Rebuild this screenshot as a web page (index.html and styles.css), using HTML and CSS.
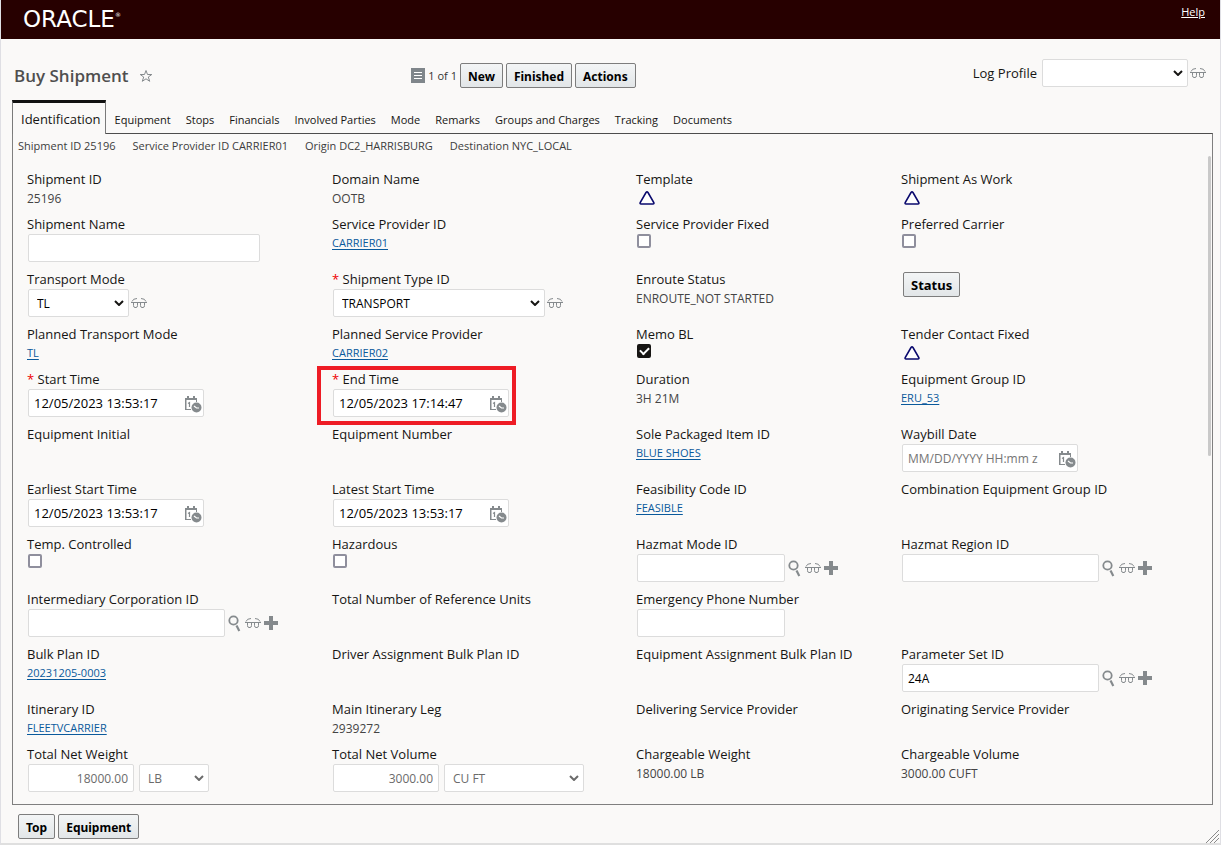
FILE: index.html
```html
<!DOCTYPE html>
<html lang="en">
<head>
  <meta charset="UTF-8" />
  <meta name="viewport" content="width=device-width, initial-scale=1.0"/>
  <title>Buy Shipment</title>
  <link rel="stylesheet" href="styles.css">
</head>
<body>
  <!-- shared icons -->
  <svg class="sprite" aria-hidden="true">
    <symbol id="i-glasses" viewBox="0 0 16 12">
      <path d="M0 5.500h16M1 4.500Q2 1.500 6 1.500M15 4.500Q14 1.500 10 1.500M2.500 6v2.500Q2.500 10.500 4 10.500h1Q6.500 10.500 6.500 8.500V6M9.500 6v2.500Q9.500 10.500 11 10.500h1Q13.500 10.500 13.500 8.500V6" fill="none" stroke="currentColor"/>
    </symbol>
    <symbol id="i-search" viewBox="0 0 14 17">
      <circle cx="5.500" cy="5.500" r="4.200" fill="none" stroke="currentColor" stroke-width="1.800"/>
      <path d="M8.500 10.500l2.800 5.500" fill="none" stroke="currentColor" stroke-width="2.200"/>
    </symbol>
    <symbol id="i-plus" viewBox="0 0 14 14">
      <path d="M5 0h4v5h5v4H9v5H5V9H0V5h5z" fill="currentColor"/>
    </symbol>
    <symbol id="i-date" viewBox="0 0 17 17">
      <path d="M0 2h2V0h2v2h4V0h2v2h2v4h-1V4H1.500v9H6v1H0z" fill="currentColor"/>
      <path d="M3 7.500L4.500 6.500V11" fill="none" stroke="currentColor" stroke-width="1.200"/>
      <circle cx="11.500" cy="11.500" r="5" fill="currentColor"/>
      <path d="M9 10l2.500 2H14" fill="none" stroke="#fff" stroke-width="1.200"/>
    </symbol>
    <symbol id="i-down" viewBox="0 0 10 6">
      <path d="M1 1l4 4 4-4" fill="none" stroke="currentColor" stroke-width="2"/>
    </symbol>
    <symbol id="i-tri" viewBox="0 0 16 14">
      <path d="M7 1.500Q8 .3 9 1.500L14.800 11.500Q15.300 13 14 13H2Q.7 13 1.200 11.500z" fill="#fff" stroke="#0a0a6e" stroke-width="1.600"/>
    </symbol>
  </svg>

  <header class="topbar">
    <div class="logo">ORACLE<sup>®</sup></div>
    <a class="help" href="#">Help</a>
  </header>

  <div class="toolbar">
    <div class="title">
      <h1>Buy Shipment</h1>
      <button class="icon star" aria-label="Add to favorites"><svg width="14" height="14" viewBox="0 0 14 14"><path d="M7 1.500l1.500 4h4.300L9.300 8l1.400 4.300L7 9.800l-3.700 2.500L4.700 8 1.200 5.500h4.300z" fill="none" stroke="currentColor"/></svg></button>
    </div>
    <div class="actions">
      <button class="icon" aria-label="Show list"><svg width="14" height="15" viewBox="0 0 14 15"><path d="M0 0h14v15H0z" fill="#7f868b"/><path d="M3 4.500h8M3 7.500h8M3 10.500h8" stroke="#fff"/></svg></button>
      <span class="pager">1 of 1</span>
      <button class="btn">New</button>
      <button class="btn">Finished</button>
      <button class="btn">Actions</button>
    </div>
    <div class="profile">
      <label for="logProfile">Log Profile</label>
      <span class="select w-profile"><select id="logProfile"><option></option></select><svg><use href="#i-down"/></svg></span>
      <button class="icon" aria-label="View log profile"><svg width="16" height="12"><use href="#i-glasses"/></svg></button>
    </div>
  </div>

  <nav class="tabs">
    <a class="active" href="#">Identification</a>
    <a href="#">Equipment</a>
    <a href="#">Stops</a>
    <a href="#">Financials</a>
    <a href="#">Involved Parties</a>
    <a href="#">Mode</a>
    <a href="#">Remarks</a>
    <a href="#">Groups and Charges</a>
    <a href="#">Tracking</a>
    <a href="#">Documents</a>
  </nav>

  <main class="panel">
    <div class="summary">
      <span>Shipment ID 25196</span>
      <span>Service Provider ID CARRIER01</span>
      <span>Origin DC2_HARRISBURG</span>
      <span>Destination NYC_LOCAL</span>
    </div>

    <div class="scroll-area">
      <form class="fields">
        <div class="field"><span class="label">Shipment ID</span><span class="value">25196</span></div>
        <div class="field"><span class="label">Domain Name</span><span class="value">OOTB</span></div>
        <div class="field"><span class="label">Template</span><svg class="tri"><use href="#i-tri"/></svg></div>
        <div class="field"><span class="label">Shipment As Work</span><svg class="tri"><use href="#i-tri"/></svg></div>

        <div class="field"><label for="shipName">Shipment Name</label><div class="row"><input class="w-name" type="text" id="shipName"></div></div>
        <div class="field"><span class="label">Service Provider ID</span><a href="#">CARRIER01</a></div>
        <div class="field"><label for="spFixed">Service Provider Fixed</label><input type="checkbox" id="spFixed"></div>
        <div class="field"><label for="prefCarrier">Preferred Carrier</label><input type="checkbox" id="prefCarrier"></div>

        <div class="field"><label for="mode">Transport Mode</label>
          <div class="row">
            <span class="select w-mode"><select id="mode"><option>TL</option></select><svg><use href="#i-down"/></svg></span>
            <button type="button" class="icon" aria-label="View"><svg width="16" height="12"><use href="#i-glasses"/></svg></button>
          </div>
        </div>
        <div class="field"><label for="shipType"><b>*</b> Shipment Type ID</label>
          <div class="row">
            <span class="select w-type"><select id="shipType"><option>TRANSPORT</option></select><svg><use href="#i-down"/></svg></span>
            <button type="button" class="icon" aria-label="View"><svg width="16" height="12"><use href="#i-glasses"/></svg></button>
          </div>
        </div>
        <div class="field"><span class="label">Enroute Status</span><span class="value">ENROUTE_NOT STARTED</span></div>
        <div class="field status"><button type="button" class="btn">Status</button></div>

        <div class="field"><span class="label">Planned Transport Mode</span><a href="#">TL</a></div>
        <div class="field"><span class="label">Planned Service Provider</span><a href="#">CARRIER02</a></div>
        <div class="field"><label for="memoBl">Memo BL</label><input type="checkbox" id="memoBl" checked></div>
        <div class="field"><span class="label">Tender Contact Fixed</span><svg class="tri"><use href="#i-tri"/></svg></div>

        <div class="field"><label for="startTime"><b>*</b> Start Time</label>
          <div class="row date"><input type="text" id="startTime" value="12/05/2023 13:53:17"><button type="button" class="icon" aria-label="Pick date"><svg width="17" height="17"><use href="#i-date"/></svg></button></div>
        </div>
        <div class="field highlight"><label for="endTime"><b>*</b> End Time</label>
          <div class="row date"><input type="text" id="endTime" value="12/05/2023 17:14:47"><button type="button" class="icon" aria-label="Pick date"><svg width="17" height="17"><use href="#i-date"/></svg></button></div>
        </div>
        <div class="field"><span class="label">Duration</span><span class="value">3H 21M</span></div>
        <div class="field"><span class="label">Equipment Group ID</span><a href="#">ERU_53</a></div>

        <div class="field"><span class="label">Equipment Initial</span></div>
        <div class="field"><span class="label">Equipment Number</span></div>
        <div class="field"><span class="label">Sole Packaged Item ID</span><a href="#">BLUE SHOES</a></div>
        <div class="field"><label for="waybill">Waybill Date</label>
          <div class="row date"><input type="text" id="waybill" placeholder="MM/DD/YYYY HH:mm z"><button type="button" class="icon" aria-label="Pick date"><svg width="17" height="17"><use href="#i-date"/></svg></button></div>
        </div>

        <div class="field"><label for="earliest">Earliest Start Time</label>
          <div class="row date"><input type="text" id="earliest" value="12/05/2023 13:53:17"><button type="button" class="icon" aria-label="Pick date"><svg width="17" height="17"><use href="#i-date"/></svg></button></div>
        </div>
        <div class="field"><label for="latest">Latest Start Time</label>
          <div class="row date"><input type="text" id="latest" value="12/05/2023 13:53:17"><button type="button" class="icon" aria-label="Pick date"><svg width="17" height="17"><use href="#i-date"/></svg></button></div>
        </div>
        <div class="field"><span class="label">Feasibility Code ID</span><a href="#">FEASIBLE</a></div>
        <div class="field"><span class="label">Combination Equipment Group ID</span></div>

        <div class="field"><label for="tempCtl">Temp. Controlled</label><input type="checkbox" id="tempCtl"></div>
        <div class="field"><label for="hazardous">Hazardous</label><input type="checkbox" id="hazardous"></div>
        <div class="field"><label for="hazMode">Hazmat Mode ID</label>
          <div class="row lookup">
            <input class="w-short" type="text" id="hazMode">
            <button type="button" class="icon" aria-label="Find"><svg width="14" height="17"><use href="#i-search"/></svg></button>
            <button type="button" class="icon" aria-label="View"><svg width="16" height="12"><use href="#i-glasses"/></svg></button>
            <button type="button" class="icon" aria-label="New"><svg width="14" height="14"><use href="#i-plus"/></svg></button>
          </div>
        </div>
        <div class="field"><label for="hazRegion">Hazmat Region ID</label>
          <div class="row lookup">
            <input class="w-id" type="text" id="hazRegion">
            <button type="button" class="icon" aria-label="Find"><svg width="14" height="17"><use href="#i-search"/></svg></button>
            <button type="button" class="icon" aria-label="View"><svg width="16" height="12"><use href="#i-glasses"/></svg></button>
            <button type="button" class="icon" aria-label="New"><svg width="14" height="14"><use href="#i-plus"/></svg></button>
          </div>
        </div>

        <div class="field"><label for="corp">Intermediary Corporation ID</label>
          <div class="row lookup">
            <input class="w-id" type="text" id="corp">
            <button type="button" class="icon" aria-label="Find"><svg width="14" height="17"><use href="#i-search"/></svg></button>
            <button type="button" class="icon" aria-label="View"><svg width="16" height="12"><use href="#i-glasses"/></svg></button>
            <button type="button" class="icon" aria-label="New"><svg width="14" height="14"><use href="#i-plus"/></svg></button>
          </div>
        </div>
        <div class="field"><span class="label">Total Number of Reference Units</span></div>
        <div class="field"><label for="phone">Emergency Phone Number</label><div class="row"><input class="w-short" type="text" id="phone"></div></div>
        <div class="field"></div>

        <div class="field"><span class="label">Bulk Plan ID</span><a href="#">20231205-0003</a></div>
        <div class="field"><span class="label">Driver Assignment Bulk Plan ID</span></div>
        <div class="field"><span class="label">Equipment Assignment Bulk Plan ID</span></div>
        <div class="field"><label for="paramSet">Parameter Set ID</label>
          <div class="row lookup">
            <input class="w-id" type="text" id="paramSet" value="24A">
            <button type="button" class="icon" aria-label="Find"><svg width="14" height="17"><use href="#i-search"/></svg></button>
            <button type="button" class="icon" aria-label="View"><svg width="16" height="12"><use href="#i-glasses"/></svg></button>
            <button type="button" class="icon" aria-label="New"><svg width="14" height="14"><use href="#i-plus"/></svg></button>
          </div>
        </div>

        <div class="field"><span class="label">Itinerary ID</span><a href="#">FLEETVCARRIER</a></div>
        <div class="field"><span class="label">Main Itinerary Leg</span><span class="value">2939272</span></div>
        <div class="field"><span class="label">Delivering Service Provider</span></div>
        <div class="field"><span class="label">Originating Service Provider</span></div>

        <div class="field"><label for="netWeight">Total Net Weight</label>
          <div class="row measure">
            <input type="text" id="netWeight" value="18000.00" disabled>
            <span class="select w-lb"><select aria-label="Weight unit" disabled><option>LB</option></select><svg><use href="#i-down"/></svg></span>
          </div>
        </div>
        <div class="field"><label for="netVolume">Total Net Volume</label>
          <div class="row measure">
            <input type="text" id="netVolume" value="3000.00" disabled>
            <span class="select w-cuft"><select aria-label="Volume unit" disabled><option>CU FT</option></select><svg><use href="#i-down"/></svg></span>
          </div>
        </div>
        <div class="field"><span class="label">Chargeable Weight</span><span class="value">18000.00 LB</span></div>
        <div class="field"><span class="label">Chargeable Volume</span><span class="value">3000.00 CUFT</span></div>
      </form>
      <div class="thumb"></div>
    </div>
  </main>

  <footer class="footer">
    <button class="btn">Top</button>
    <button class="btn">Equipment</button>
    <svg class="grip" width="13" height="13" viewBox="0 0 13 13"><path d="M0 13L13 0M4 13l9-9M8 13l5-5" stroke="#8a8a8a" fill="none"/></svg>
  </footer>
</body>
</html>
```
FILE: styles.css
```css
* {
  box-sizing: border-box;
}

body {
  margin: 0;
  min-height: 100vh;
  border: 1px solid #dfdfe4;
  border-top: none;
  border-bottom: 2px solid #dfdfdf;
  background-color: #faf9f8;
  color: #161513;
  font-family: "Open Sans", "Noto Sans", sans-serif;
  font-size: 13px;
  line-height: 18px;
}

button, input, select {
  font-family: inherit;
  font-size: 13px;
  margin: 0;
}

.sprite {
  position: absolute;
  width: 0;
  height: 0;
}

.topbar {
  display: flex;
  justify-content: space-between;
  height: 39px;
  padding: 0 15px 0 22px;
  background-color: #270000;
  color: #fff;
}

.logo {
  font-family: "DejaVu Sans", sans-serif;
  font-size: 23px;
  line-height: 39px;
}

.logo sup {
  font-size: 6px;
  line-height: 6px;
  vertical-align: 10px;
}

.help {
  color: #fff;
  font-size: 11px;
  line-height: 24px;
}

.toolbar {
  display: grid;
  grid-template-columns: repeat(3, 1fr);
  align-items: center;
  height: 61px;
  padding: 12px 14px 0 13px;
}

.title, .actions, .profile, .row {
  display: flex;
  align-items: center;
}

.title {
  gap: 10px;
}

h1 {
  margin: 0;
  color: #4f4f4f;
  font-size: 17px;
  font-weight: 600;
  line-height: 24px;
}

.icon {
  display: flex;
  padding: 0;
  border: none;
  background: none;
  color: #858a8d;
  cursor: pointer;
}

.actions {
  gap: 3px;
}

.pager {
  color: #333;
  font-size: 11px;
}

.btn {
  height: 25px;
  padding: 0 7px;
  border: 1px solid #7d7d7d;
  border-radius: 2px;
  background: linear-gradient(#f3f5f6, #e2e6e8);
  color: #000;
  font-family: "Noto Sans", sans-serif;
  font-size: 12px;
  font-weight: bold;
  line-height: 25px;
  cursor: pointer;
}

.profile {
  justify-content: flex-end;
  gap: 2px;
  padding-bottom: 6px;
}

.profile label {
  margin-right: 3px;
}

.select {
  position: relative;
  display: block;
  height: 28px;
}

.select select {
  width: 100%;
  height: 28px;
  padding: 0 8px;
  appearance: none;
  border: 1px solid #dcdcdc;
  border-radius: 2px;
  background-color: #fff;
  color: #000;
  font-size: 12px;
}

.select svg {
  position: absolute;
  top: 11px;
  right: 5px;
  width: 10px;
  height: 6px;
  pointer-events: none;
}

.tabs {
  display: flex;
  align-items: flex-end;
  gap: 15px;
  margin-left: 11px;
}

.tabs a {
  height: 33px;
  color: #161513;
  font-size: 11px;
  line-height: 40px;
  text-decoration: none;
}

.tabs .active {
  z-index: 1;
  height: 34px;
  margin-right: -6px;
  margin-bottom: -1px;
  padding: 0 4px 0 8px;
  border: 1px solid #7a7a7a;
  border-top: 3px solid #111;
  border-bottom: none;
  background-color: #faf9f8;
  font-size: 13px;
  line-height: 32px;
}

.panel {
  margin: 0 7px 0 11px;
  border: 1px solid #7f7f7f;
  border-top-color: #4d4d4d;
}

.summary {
  display: flex;
  gap: 17px;
  height: 20px;
  padding: 3px 5px 0;
  color: #3c3c3c;
  font-size: 11px;
}

.scroll-area {
  position: relative;
  padding: 17px 11px 12px 14px;
}

.thumb {
  position: absolute;
  top: 2px;
  right: 1px;
  width: 3px;
  height: 300px;
  border-radius: 2px;
  background-color: #c9c9c9;
}

.fields {
  display: grid;
  grid-template-columns: 305fr 304fr 265fr 300fr;
  row-gap: 9px;
}

.field {
  display: flex;
  flex-direction: column;
  align-items: flex-start;
  min-width: 0;
}

.field label, .label {
  padding-bottom: 2px;
  line-height: 16px;
}

.field b {
  color: #e00;
  font-weight: normal;
}

.value {
  padding-top: 2px;
  color: #444;
  font-size: 12px;
  line-height: 16px;
}

.field a {
  color: #0a5a9c;
  font-size: 11px;
  text-underline-offset: 2px;
}

.tri {
  width: 16px;
  height: 14px;
  margin: 2px 3px;
}

input[type="text"] {
  width: 100%;
  height: 28px;
  padding: 0 5px;
  border: 1px solid #dcdcdc;
  border-radius: 2px;
  background-color: #fff;
  color: #000;
  font-size: 12px;
}

.row.date input {
  font-size: 13px;
}

.row.date input::placeholder {
  color: #757575;
  font-size: 12px;
}

input[type="checkbox"] {
  display: grid;
  place-items: center;
  width: 14px;
  height: 14px;
  margin-left: 1px;
  appearance: none;
  border: 2px solid #8f8f9d;
  border-radius: 2px;
  background-color: #fff;
}

input[type="checkbox"]:checked {
  border-color: #161513;
  background-color: #161513;
}

input[type="checkbox"]:checked::after {
  content: "";
  box-sizing: border-box;
  width: 9px;
  height: 6px;
  margin-bottom: 3px;
  border: solid #fff;
  border-width: 0 0 2px 2px;
  transform: rotate(-45deg);
}

.row {
  gap: 2px;
  margin-left: 1px;
}

.lookup {
  gap: 3px;
}

.date {
  position: relative;
  width: 176px;
}

.date .icon {
  position: absolute;
  top: 7px;
  right: 2px;
}

.measure {
  gap: 5px;
}

.row.measure input {
  width: 106px;
  text-align: right;
}

.row.measure input, .row.measure select, .row.measure svg {
  color: #6b6b6b;
  opacity: 1;
}

.row .w-name {
  width: 232px;
}

.row .w-id {
  width: 197px;
}

.row .w-short {
  width: 148px;
}

.w-profile {
  width: 146px;
}

.w-mode {
  width: 101px;
}

.w-type {
  width: 212px;
}

.w-lb {
  width: 70px;
}

.w-cuft {
  width: 140px;
}

.status {
  padding: 1px 2px;
}

.status .btn {
  font-size: 13px;
}

.highlight {
  position: relative;
}

/* callout frame around the end time */
.highlight::after {
  content: "";
  position: absolute;
  top: -5px;
  left: -15px;
  box-sizing: border-box;
  width: 199px;
  height: 59px;
  border: 4px solid #ee1c25;
  pointer-events: none;
}

.footer {
  position: relative;
  display: flex;
  gap: 3px;
  padding: 9px 17px 4px;
}

.grip {
  position: absolute;
  right: 1px;
  bottom: 0;
}
```
